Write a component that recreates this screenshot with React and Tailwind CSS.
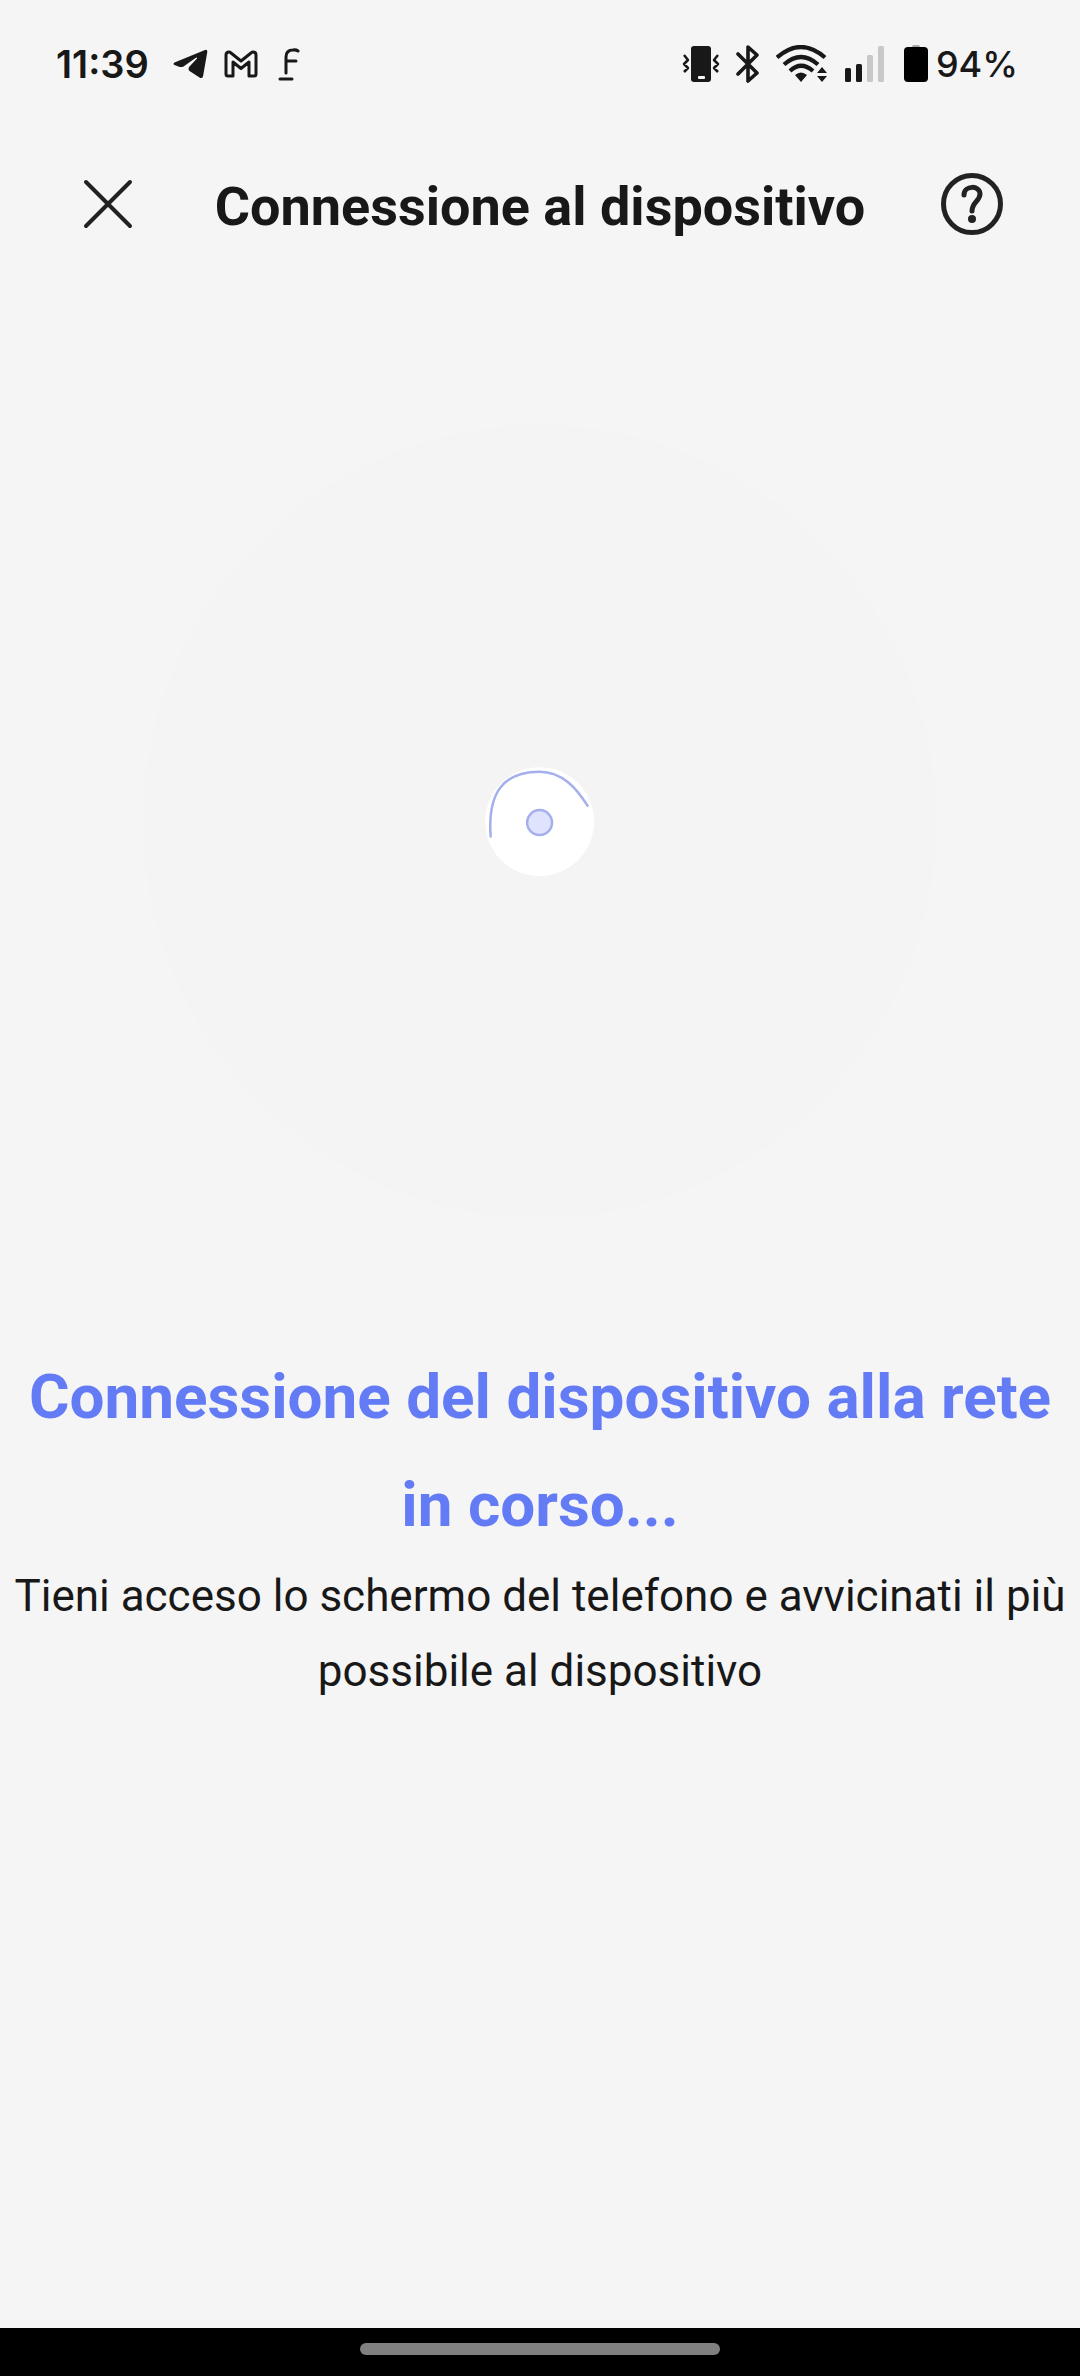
const TelegramIcon = () => (
  <svg viewBox="0 0 35 30" className="h-[30px] w-[35px]" fill="currentColor" aria-hidden>
    <path d="M32 1Q34.500 0 34.300 3L30 27.500Q29 30 26.500 28.500L16.500 22Q14.500 20 16.500 17.500L24 9.500Q24.500 8 22.500 9L10.500 17.500Q8.500 18.500 6 17.800L1.500 16Q-.5 15 1.500 13.500Z" />
  </svg>
)

const GmailIcon = () => (
  <svg viewBox="0 0 34 28" className="h-7 w-[34px]" fill="none" aria-hidden>
    <path
      d="M2 5Q2 2 5 2Q6 2 7 3L17 11L27 3Q28 2 29 2Q32 2 32 5V24Q32 26 30 26H25V12L17 18.500L9 12V26H4Q2 26 2 24Z"
      stroke="currentColor"
      strokeWidth="3"
      strokeLinejoin="round"
    />
  </svg>
)

const FontIcon = () => (
  <svg viewBox="0 0 22 34" className="h-[34px] w-[22px]" fill="none" aria-hidden>
    <path
      d="M8 26V10q0-7 7-7 3-.5 5 1M8 14h10M2 32h12"
      stroke="currentColor"
      strokeWidth="3"
      strokeLinecap="round"
      strokeLinejoin="round"
    />
  </svg>
)

const VibrateIcon = () => (
  <svg viewBox="0 0 38 38" className="h-[38px] w-[38px]" fill="none" aria-hidden>
    <rect x="9" y="1" width="20" height="36" rx="3" fill="currentColor" />
    <rect x="16" y="31" width="7" height="3" rx="1" fill="#f5f5f5" />
    <path
      d="M2 10l4 5-4 4 4 4-4 4M36 10l-4 5 4 4-4 4 4 4"
      stroke="currentColor"
      strokeWidth="2.500"
      strokeLinejoin="round"
    />
  </svg>
)

const BluetoothIcon = () => (
  <svg viewBox="0 0 24 38" className="h-[38px] w-6" fill="none" aria-hidden>
    <path
      d="M2 9l19 19-9 8V2l9 8L2 29"
      stroke="currentColor"
      strokeWidth="3.600"
      strokeLinejoin="round"
      strokeLinecap="round"
    />
  </svg>
)

const WifiIcon = () => (
  <svg viewBox="0 0 52 38" className="h-[38px] w-[52px]" fill="none" aria-hidden>
    <g stroke="currentColor" strokeWidth="4.200">
      <path d="M1 12.500Q25-8.500 49 12.500" />
      <path d="M8 19.500Q25 4.500 42 19.500" />
      <path d="M14 26Q25 15.500 37 26" />
    </g>
    <path d="M19 30q6-5 12 0l-6 7z" fill="currentColor" />
    <path d="M41 28l5-6 5 6zM41 31h10l-5 6z" fill="currentColor" />
  </svg>
)

const SignalIcon = () => (
  <svg viewBox="0 0 40 38" className="h-[38px] w-10" fill="currentColor" aria-hidden>
    <rect x="1" y="23" width="6" height="14" rx="1.500" />
    <rect x="12" y="19" width="6" height="18" rx="1.500" />
    <rect x="23" y="10" width="6" height="27" rx="1.500" fill="#c8c8c8" />
    <rect x="34" y="1" width="6" height="36" rx="1.500" fill="#c8c8c8" />
  </svg>
)

const BatteryIcon = () => (
  <svg viewBox="0 0 24 38" className="h-[38px] w-6" aria-hidden>
    <rect x="8" y="0" width="8" height="6" rx="2" fill="#a8a8a8" />
    <rect x="0" y="2" width="24" height="35" rx="4" fill="#000" />
  </svg>
)

function StatusBar() {
  return (
    <div className="flex h-32 items-center justify-between pr-[62px] pl-14 font-['Inter',sans-serif]">
      <div className="flex items-center">
        <span className="text-[38px] font-semibold">11:39</span>
        <div className="flex items-center gap-4 pl-6">
          <TelegramIcon />
          <GmailIcon />
          <span className="pl-1">
            <FontIcon />
          </span>
        </div>
      </div>
      <div className="flex items-center gap-4">
        <VibrateIcon />
        <BluetoothIcon />
        <WifiIcon />
        <SignalIcon />
        <div className="flex items-center gap-2 pl-1">
          <BatteryIcon />
          <span className="text-[36px] font-medium">94%</span>
        </div>
      </div>
    </div>
  )
}

function Header() {
  return (
    <header className="flex h-[152px] items-center justify-between px-[75px]">
      <button type="button" aria-label="Chiudi">
        <svg viewBox="0 0 66 66" className="h-[66px] w-[66px]" fill="none">
          <path d="M11 11l44 44M55 11L11 55" stroke="#222" strokeWidth="4" strokeLinecap="round" />
        </svg>
      </button>
      <h1 className="pt-1 text-[54px] font-bold">Connessione al dispositivo</h1>
      <button type="button" aria-label="Aiuto">
        <svg viewBox="0 0 66 66" className="h-[66px] w-[66px]" fill="none">
          <circle cx="33" cy="33" r="28.500" stroke="#222" strokeWidth="5" />
          <path
            d="M25 24c0-10 16-10 16-1 0 7-8 8-8 17"
            stroke="#222"
            strokeWidth="5"
            strokeLinecap="round"
          />
          <circle cx="33" cy="48" r="4" fill="#222" />
        </svg>
      </button>
    </header>
  )
}

// Radar pulse with the spinning arc in its centre.
function Scanner() {
  return (
    <svg viewBox="0 0 800 800" className="mx-auto w-[74%]" fill="none" role="img" aria-label="Ricerca">
      <circle cx="400" cy="400" r="397" fill="#f4f4f4" />
      <circle cx="400" cy="400" r="54.500" fill="#fff" />
      <path
        d="M351 415C348 373 362 350 400 350C423 350 437 367 448 384"
        stroke="#a4afec"
        strokeWidth="2.500"
        strokeLinecap="round"
      />
      <circle cx="400" cy="401" r="12.500" fill="#dfe3fd" stroke="#a4afec" strokeWidth="2.500" />
    </svg>
  )
}

export default function App() {
  return (
    <div className="flex min-h-screen flex-col bg-[#f5f5f5] font-['Roboto',sans-serif] text-[#181818]">
      <StatusBar />
      <Header />
      <main className="flex-1 pt-[142px] text-center">
        <Scanner />
        <h2 className="px-6 pt-[122px] text-[62px] leading-[108px] font-bold text-[#637bf5]">
          Connessione del dispositivo alla rete in corso...
        </h2>
        <p className="px-3 text-[44px] leading-[75px]">
          Tieni acceso lo schermo del telefono e avvicinati il più possibile al dispositivo
        </p>
      </main>
      <footer className="flex h-12 justify-center bg-black pt-[15px]">
        <span className="h-3 w-1/3 rounded-full bg-[#808080]" />
      </footer>
    </div>
  )
}
